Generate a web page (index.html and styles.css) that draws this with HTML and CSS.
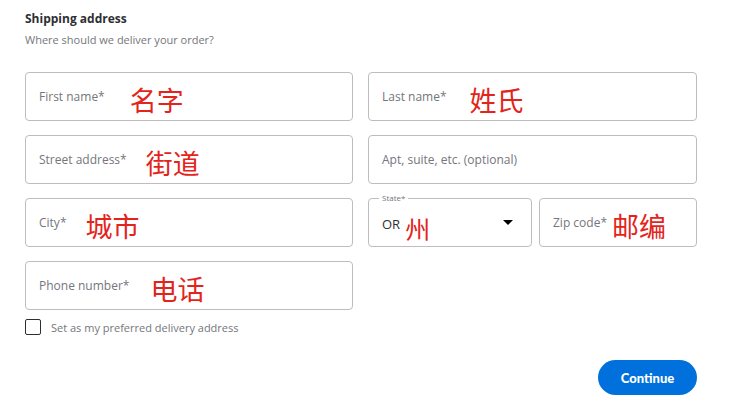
FILE: index.html
```html
<!DOCTYPE html>
<html lang="en">
<head>
  <meta charset="UTF-8" />
  <meta name="viewport" content="width=device-width, initial-scale=1.0" />
  <title>Shipping address</title>
  <link rel="stylesheet" href="styles.css">
</head>
<body>
  <div class="container">
    <h2 class="title">Shipping address</h2>
    <p class="subtitle">Where should we deliver your order?</p>

    <div class="fields">
      <div class="field">
        <span class="label">First name*</span>
        <span class="note note-wide">名字</span>
      </div>
      <div class="field">
        <span class="label">Last name*</span>
        <span class="note note-mid">姓氏</span>
      </div>
      <div class="field">
        <span class="label">Street address*</span>
        <span class="note note-tight">街道</span>
      </div>
      <div class="field">
        <span class="label">Apt, suite, etc. (optional)</span>
      </div>
      <div class="field">
        <span class="label">City*</span>
        <span class="note note-tight">城市</span>
      </div>
      <div class="split">
        <div class="field field-select">
          <span class="legend">State*</span>
          <span class="value">OR</span>
          <span class="note note-close note-low">州</span>
          <span class="caret"></span>
        </div>
        <div class="field">
          <span class="label">Zip code*</span>
          <span class="note note-close">邮编</span>
        </div>
      </div>
      <div class="field">
        <span class="label">Phone number*</span>
        <span class="note">电话</span>
      </div>
    </div>

    <label class="check">
      <span class="box"></span>
      <span>Set as my preferred delivery address</span>
    </label>

    <div class="actions">
      <button class="btn">Continue</button>
    </div>
  </div>
</body>
</html>
```

FILE: styles.css
```css
:root {
  --text-color: #2e2f32;
  --muted-color: #74767c;
  --border-color: #bdbdbd;
  --note-color: #e3241b;
  --accent-color: #0071dc;
}

body {
  margin: 0;
  background: #fff;
  font-family: 'Open Sans', Lato, sans-serif;
  color: var(--text-color);
}

.container {
  width: 672px;
  padding: 11px 25px 0;
}

.title {
  margin: 0;
  font-size: 12px;
  line-height: 16px;
  font-weight: bold;
}

.subtitle {
  margin: 5px 0 0;
  font-size: 11px;
  line-height: 16px;
  color: var(--muted-color);
}

.fields {
  display: grid;
  grid-template-columns: 328px 329px;
  column-gap: 15px;
  row-gap: 14px;
  margin-top: 24px;
}

.field {
  position: relative;
  height: 49px;
  box-sizing: border-box;
  border: 1px solid var(--border-color);
  border-radius: 4px;
  display: flex;
  align-items: center;
  padding: 0 13px;
}

.label {
  font-size: 12px;
  color: var(--muted-color);
}

.note {
  margin-left: 21px;
  font-family: 'Noto Sans CJK SC', sans-serif;
  font-size: 27px;
  line-height: 1;
  color: var(--note-color);
  padding-top: 5px;
}

.note-wide { margin-left: 25px; }
.note-mid { margin-left: 23px; }
.note-tight { margin-left: 19px; }
.note-close { margin-left: 5px; }
.note-low { padding-top: 12px; font-size: 25px; }

.split {
  display: grid;
  grid-template-columns: 164px 158px;
  column-gap: 7px;
}

.field-select {
  padding-right: 18px;
}

.legend {
  position: absolute;
  top: -6px;
  left: 10px;
  padding: 0 3px;
  background: #fff;
  font-size: 8px;
  line-height: 10px;
  color: var(--muted-color);
}

.value {
  font-size: 13px;
  color: var(--text-color);
  padding-top: 2px;
}

.caret {
  margin-left: auto;
  width: 0;
  height: 0;
  border-left: 5px solid transparent;
  border-right: 5px solid transparent;
  border-top: 5px solid #000;
}

.check {
  display: flex;
  align-items: center;
  gap: 10px;
  margin-top: 9px;
  font-size: 11px;
  color: var(--muted-color);
}

.box {
  width: 16px;
  height: 16px;
  box-sizing: border-box;
  border: 1.5px solid var(--text-color);
  border-radius: 2px;
}

.actions {
  display: flex;
  justify-content: flex-end;
  margin-top: 25px;
}

.btn {
  width: 99px;
  height: 35px;
  border: none;
  border-radius: 18px;
  background-color: var(--accent-color);
  color: #fff;
  font-family: Lato, 'Open Sans', sans-serif;
  font-size: 13px;
  font-weight: 900;
  cursor: pointer;
}
```
